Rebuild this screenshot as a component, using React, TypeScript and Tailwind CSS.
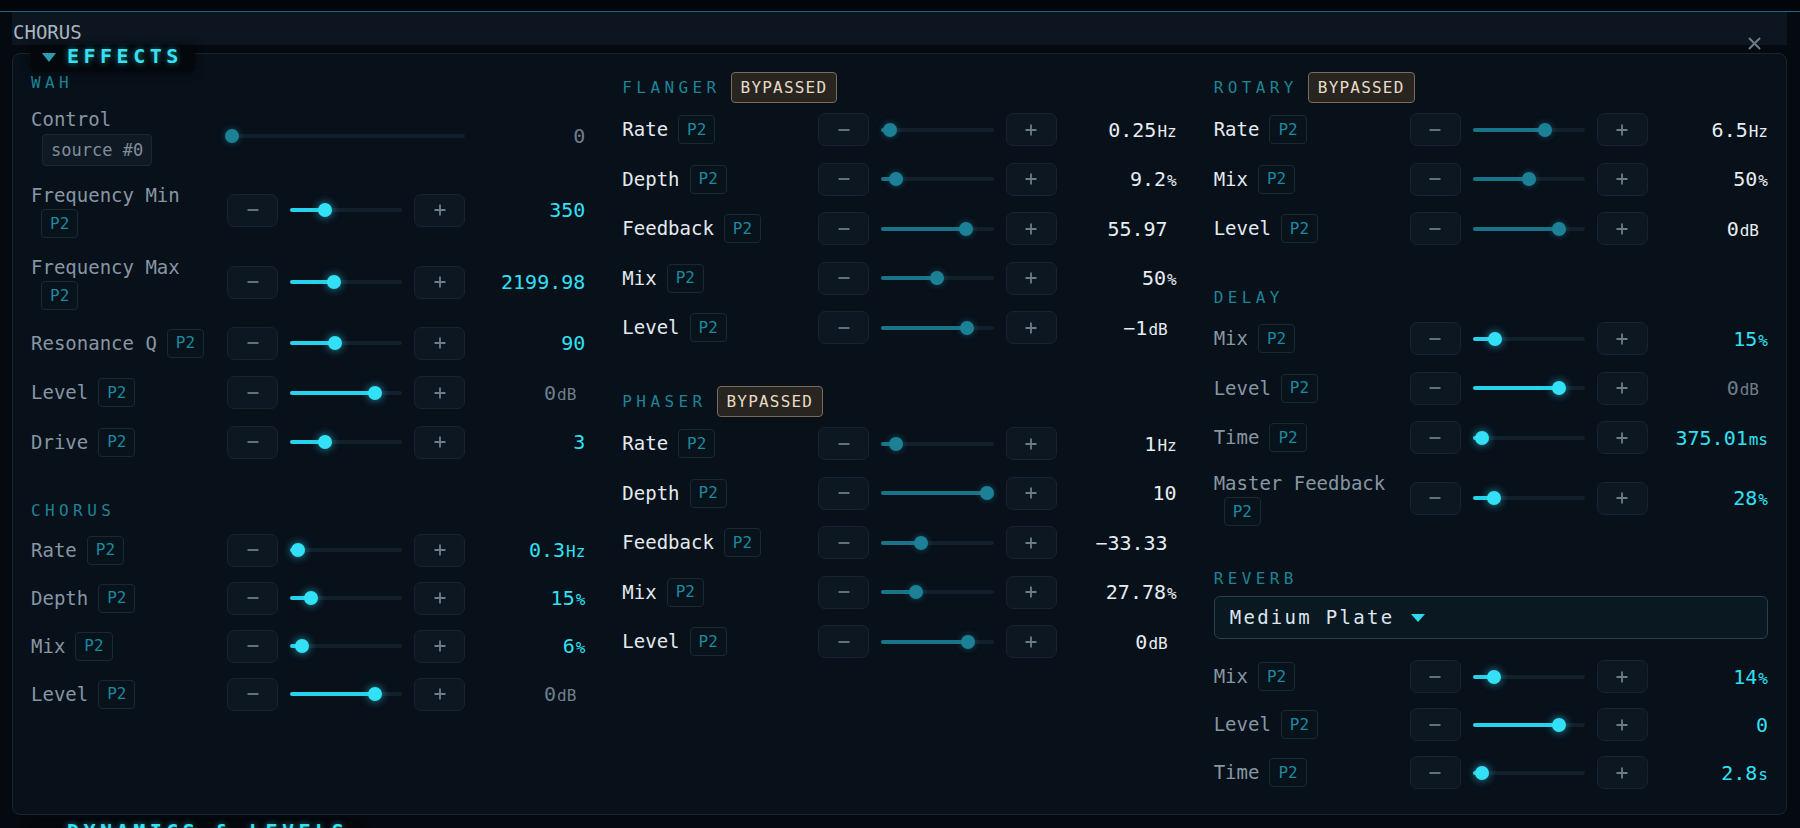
import React from "react";

type Tone = "active" | "bypass";
type VTone = "accent" | "muted" | "plain";

type RowDef = {
  label: string;
  p: number;
  v: string;
  unit?: string;
  two?: boolean;
  vt?: VTone;
  pr?: boolean;
};

function Chip({ className = "" }: { className?: string }) {
  return (
    <span
      className={
        "inline-flex h-[29px] items-center rounded-[4px] border border-[#182835] bg-[#08121b] px-[8px] text-[16px] leading-none text-[#1b89a0] " +
        className
      }
    >
      P2
    </span>
  );
}

function Btn({ plus }: { plus?: boolean }) {
  return (
    <div className="flex h-[33px] w-[51px] shrink-0 items-center justify-center rounded-[7px] border border-[#172330] bg-[#0d1721]">
      {plus ? (
        <svg width="12" height="12" viewBox="0 0 12 12">
          <path d="M6 0.5V11.5M0.5 6H11.5" stroke="#6b7c8a" strokeWidth="1.8" />
        </svg>
      ) : (
        <svg width="12" height="12" viewBox="0 0 12 12">
          <path d="M0.5 6H11.5" stroke="#5f7180" strokeWidth="2" />
        </svg>
      )}
    </div>
  );
}

function Slider({ p, tone }: { p: number; tone: Tone | "dim" }) {
  const fill =
    tone === "active"
      ? "absolute left-0 top-[5px] h-[4px] rounded-full bg-[#27d2eb]"
      : tone === "bypass"
      ? "absolute left-0 top-[5px] h-[4px] rounded-full bg-[#1a7489]"
      : "hidden";
  const thumb =
    tone === "active"
      ? "absolute top-0 h-[14px] w-[14px] -translate-x-1/2 rounded-full bg-[#33e1f7] shadow-[0_0_8px_rgba(46,224,247,0.65)]"
      : "absolute top-0 h-[14px] w-[14px] -translate-x-1/2 rounded-full bg-[#1c8196] shadow-[0_0_6px_rgba(28,129,150,0.55)]";
  return (
    <div className="relative h-[14px] w-full">
      <div className="absolute inset-x-0 top-[5px] h-[4px] rounded-full bg-[#12202c]" />
      <div className={fill} style={{ width: `${p}%` }} />
      <div className={thumb} style={{ left: `${p}%` }} />
    </div>
  );
}

function Value({ v, unit, cls, pr }: { v: string; unit?: string; cls: string; pr?: boolean }) {
  return (
    <div className={"w-[120px] shrink-0 text-right " + cls + (pr ? " pr-[9px]" : "")}>
      <span className="text-[20px]">{v}</span>
      {unit ? <span className="ml-px text-[16px]">{unit}</span> : null}
    </div>
  );
}

function Row({ d, tone }: { d: RowDef; tone: Tone }) {
  const labelCls = tone === "active" ? "text-[#8796a3]" : "text-[#e3eaef]";
  const vt: VTone = d.vt ?? (tone === "active" ? "accent" : "plain");
  const vcls =
    vt === "accent" ? "text-[#2fe1f5]" : vt === "muted" ? "text-[#6e7f8c]" : "text-[#e6edf2]";
  return (
    <div className="flex items-center">
      <div className={"w-[196px] shrink-0 text-[19px] " + labelCls}>
        {d.two ? (
          <div>
            <div className="leading-[25px]">{d.label}</div>
            <Chip className="mt-px ml-[10px]" />
          </div>
        ) : (
          <div className="flex items-center">
            <span>{d.label}</span>
            <Chip className="ml-[10px]" />
          </div>
        )}
      </div>
      <Btn />
      <div className="mx-[12px] flex-1">
        <Slider p={d.p} tone={tone} />
      </div>
      <Btn plus />
      <Value v={d.v} unit={d.unit} cls={vcls} pr={d.pr} />
    </div>
  );
}

function Title({ text, badge }: { text: string; badge?: boolean }) {
  return (
    <div className={"flex items-center " + (badge ? "h-[31px]" : "h-[22px]")}>
      <span className="text-[16px] tracking-[4.4px] text-[#1d8496]">{text}</span>
      {badge ? (
        <span className="ml-[10px] flex h-[31px] items-center rounded-[4px] border border-[#776c5b] bg-[#282520] px-[9px] text-[16px] tracking-[1.2px] text-[#e6dbc7]">
          BYPASSED
        </span>
      ) : null}
    </div>
  );
}

function Rows({
  rows,
  tone,
  className,
  tight,
}: {
  rows: RowDef[];
  tone: Tone;
  className: string;
  tight?: boolean;
}) {
  return (
    <div className={"flex flex-col " + (tight ? "gap-[15px] " : "gap-[16.5px] ") + className}>
      {rows.map((r, i) => (
        <Row key={i} d={r} tone={tone} />
      ))}
    </div>
  );
}

const wah: RowDef[] = [
  { label: "Frequency Min", two: true, p: 31, v: "350" },
  { label: "Frequency Max", two: true, p: 39.4, v: "2199.98" },
  { label: "Resonance Q", p: 40.4, v: "90" },
  { label: "Level", p: 76, v: "0", unit: "dB", vt: "muted", pr: true },
  { label: "Drive", p: 31.6, v: "3" },
];
const chorus: RowDef[] = [
  { label: "Rate", p: 7.5, v: "0.3", unit: "Hz" },
  { label: "Depth", p: 18.6, v: "15", unit: "%" },
  { label: "Mix", p: 10.6, v: "6", unit: "%" },
  { label: "Level", p: 76, v: "0", unit: "dB", vt: "muted", pr: true },
];
const flanger: RowDef[] = [
  { label: "Rate", p: 8, v: "0.25", unit: "Hz" },
  { label: "Depth", p: 13, v: "9.2", unit: "%" },
  { label: "Feedback", p: 75, v: "55.97", pr: true },
  { label: "Mix", p: 50, v: "50", unit: "%" },
  { label: "Level", p: 76, v: "\u22121", unit: "dB", pr: true },
];
const phaser: RowDef[] = [
  { label: "Rate", p: 13, v: "1", unit: "Hz" },
  { label: "Depth", p: 94, v: "10" },
  { label: "Feedback", p: 35, v: "\u221233.33", pr: true },
  { label: "Mix", p: 31, v: "27.78", unit: "%" },
  { label: "Level", p: 77, v: "0", unit: "dB", pr: true },
];
const rotary: RowDef[] = [
  { label: "Rate", p: 64, v: "6.5", unit: "Hz" },
  { label: "Mix", p: 50.5, v: "50", unit: "%" },
  { label: "Level", p: 77, v: "0", unit: "dB", pr: true },
];
const delay: RowDef[] = [
  { label: "Mix", p: 19.5, v: "15", unit: "%" },
  { label: "Level", p: 77, v: "0", unit: "dB", vt: "muted", pr: true },
  { label: "Time", p: 8, v: "375.01", unit: "ms" },
  { label: "Master Feedback", two: true, p: 18.6, v: "28", unit: "%" },
];
const reverb: RowDef[] = [
  { label: "Mix", p: 18.6, v: "14", unit: "%" },
  { label: "Level", p: 77, v: "0" },
  { label: "Time", p: 8, v: "2.8", unit: "s" },
];

function Legend({ text }: { text: string }) {
  return (
    <div className="inline-flex h-[26px] items-start whitespace-nowrap rounded-[5px] bg-[#04080d] pl-[11px] pr-[12px] shadow-[0_0_10px_rgba(0,0,0,0.6)]">
      <svg width="14" height="9" viewBox="0 0 14 9" className="mt-[7px] shrink-0">
        <polygon points="0,0 14,0 7,9" fill="#2a9db2" />
      </svg>
      <span className="ml-[11px] text-[20px] font-bold leading-[20px] tracking-[4.5px] text-[#35e2f2] [text-shadow:0_0_6px_rgba(53,226,242,0.55)]">
        {text}
      </span>
    </div>
  );
}

export default function App() {
  return (
    <div className="h-[828px] w-[1800px] overflow-hidden bg-[#050a10] font-['DejaVu_Sans_Mono',monospace]">
      <div className="h-[11px] bg-[#02050a]" />
      <div className="h-px bg-[#1b6b80]" />
      <div className="ml-[12px] w-[1775px]">
        <div className="h-[33px] overflow-hidden bg-[#0c1520] pl-px pt-[7px] text-[19px] leading-[26px] text-[#a9b5bf]">
          CHORUS
        </div>
        <div className="relative mt-[8px] rounded-[8px] border border-[#172432] bg-[#08101a] px-[18px] pb-[25px] pt-[18px]">
          <div className="absolute -top-[9px] left-[18px]">
            <Legend text="EFFECTS" />
          </div>
          <div className="absolute -top-[17px] right-[25px]">
            <svg width="13" height="13" viewBox="0 0 13 13">
              <path d="M1 1L12 12M12 1L1 12" stroke="#6c7d8c" strokeWidth="2" />
            </svg>
          </div>
          <div className="grid grid-cols-3 items-start gap-x-[37px]">
            {/* Column 1 */}
            <div>
              <Title text="WAH" />
              <div className="mt-[12px] flex flex-col gap-[16.5px]">
                <div className="flex items-center">
                  <div className="w-[196px] shrink-0 text-[19px] text-[#8796a3]">
                    <div className="leading-[26px]">Control</div>
                    <span className="ml-[11px] mt-[2px] inline-flex h-[32px] items-center rounded-[4px] border border-[#1a2836] bg-[#0f1924] px-[8px] text-[17px] leading-none text-[#7f8d99]">
                      source #0
                    </span>
                  </div>
                  <div className="flex-1">
                    <Slider p={2.3} tone="dim" />
                  </div>
                  <Value v="0" cls="text-[#6e7f8c]" />
                </div>
                {wah.map((r, i) => (
                  <Row key={i} d={r} tone="active" />
                ))}
              </div>
              <div className="mt-[41px]">
                <Title text="CHORUS" />
                <Rows rows={chorus} tone="active" className="mt-[12px]" tight />
              </div>
            </div>
            {/* Column 2 */}
            <div>
              <Title text="FLANGER" badge />
              <Rows rows={flanger} tone="bypass" className="mt-[10px]" />
              <div className="mt-[42px]">
                <Title text="PHASER" badge />
                <Rows rows={phaser} tone="bypass" className="mt-[10px]" />
              </div>
            </div>
            {/* Column 3 */}
            <div>
              <Title text="ROTARY" badge />
              <Rows rows={rotary} tone="bypass" className="mt-[10px]" />
              <div className="mt-[42px]">
                <Title text="DELAY" />
                <Rows rows={delay} tone="active" className="mt-[13px]" />
              </div>
              <div className="mt-[42px]">
                <Title text="REVERB" />
                <div className="mt-[6px] flex h-[43px] items-center rounded-[6px] border border-[#26404e] bg-[#0a1822] pl-[15px] text-[19px] tracking-[2.3px] text-[#dde6ec]">
                  <span>Medium Plate</span>
                  <svg width="14" height="8" viewBox="0 0 14 8" className="ml-[16px]">
                    <polygon points="0,0 14,0 7,8" fill="#2ed9f0" />
                  </svg>
                </div>
                <Rows rows={reverb} tone="active" className="mt-[21px]" tight />
              </div>
            </div>
          </div>
        </div>
        <div className="ml-[19px] mt-[5px]">
          <Legend text="DYNAMICS & LEVELS" />
        </div>
      </div>
    </div>
  );
}
